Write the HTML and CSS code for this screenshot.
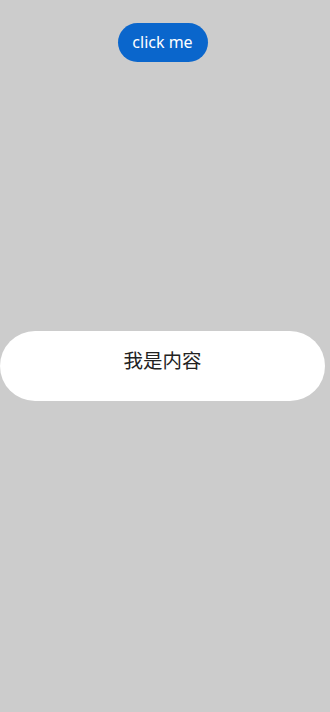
FILE: index.html
```html
<!DOCTYPE html>
<html lang="zh">
<head>
<meta charset="utf-8">
<link rel="stylesheet" href="styles.css">
</head>
<body>
<div class="page">
  <button class="btn">click me</button>
</div>
<div class="popup">
  <span class="popup-text">我是内容</span>
</div>
</body>
</html>
```
FILE: styles.css
```css
html, body {
  margin: 0;
  padding: 0;
  background: #cccccc;
  height: 100%;
}
body {
  font-family: "Noto Sans", "Noto Sans CJK SC", sans-serif;
  position: relative;
  overflow: hidden;
}
.page {
  width: 325px;
  display: flex;
  flex-direction: column;
  align-items: center;
  padding-top: 23px;
}
.btn {
  width: 90px;
  height: 39px;
  border: none;
  border-radius: 20px;
  background: #0a66cc;
  color: #ffffff;
  font-family: "Noto Sans", sans-serif;
  font-size: 16px;
  padding: 0;
  line-height: 39px;
}
.popup {
  position: absolute;
  top: 331px;
  left: 0;
  width: 325px;
  height: 70px;
  background: #ffffff;
  border-radius: 35px;
  display: flex;
  align-items: center;
  justify-content: center;
}
.popup-text {
  font-family: "Noto Sans CJK SC", sans-serif;
  font-size: 19.5px;
  color: #222222;
  position: relative;
  top: -7px;
}
```
